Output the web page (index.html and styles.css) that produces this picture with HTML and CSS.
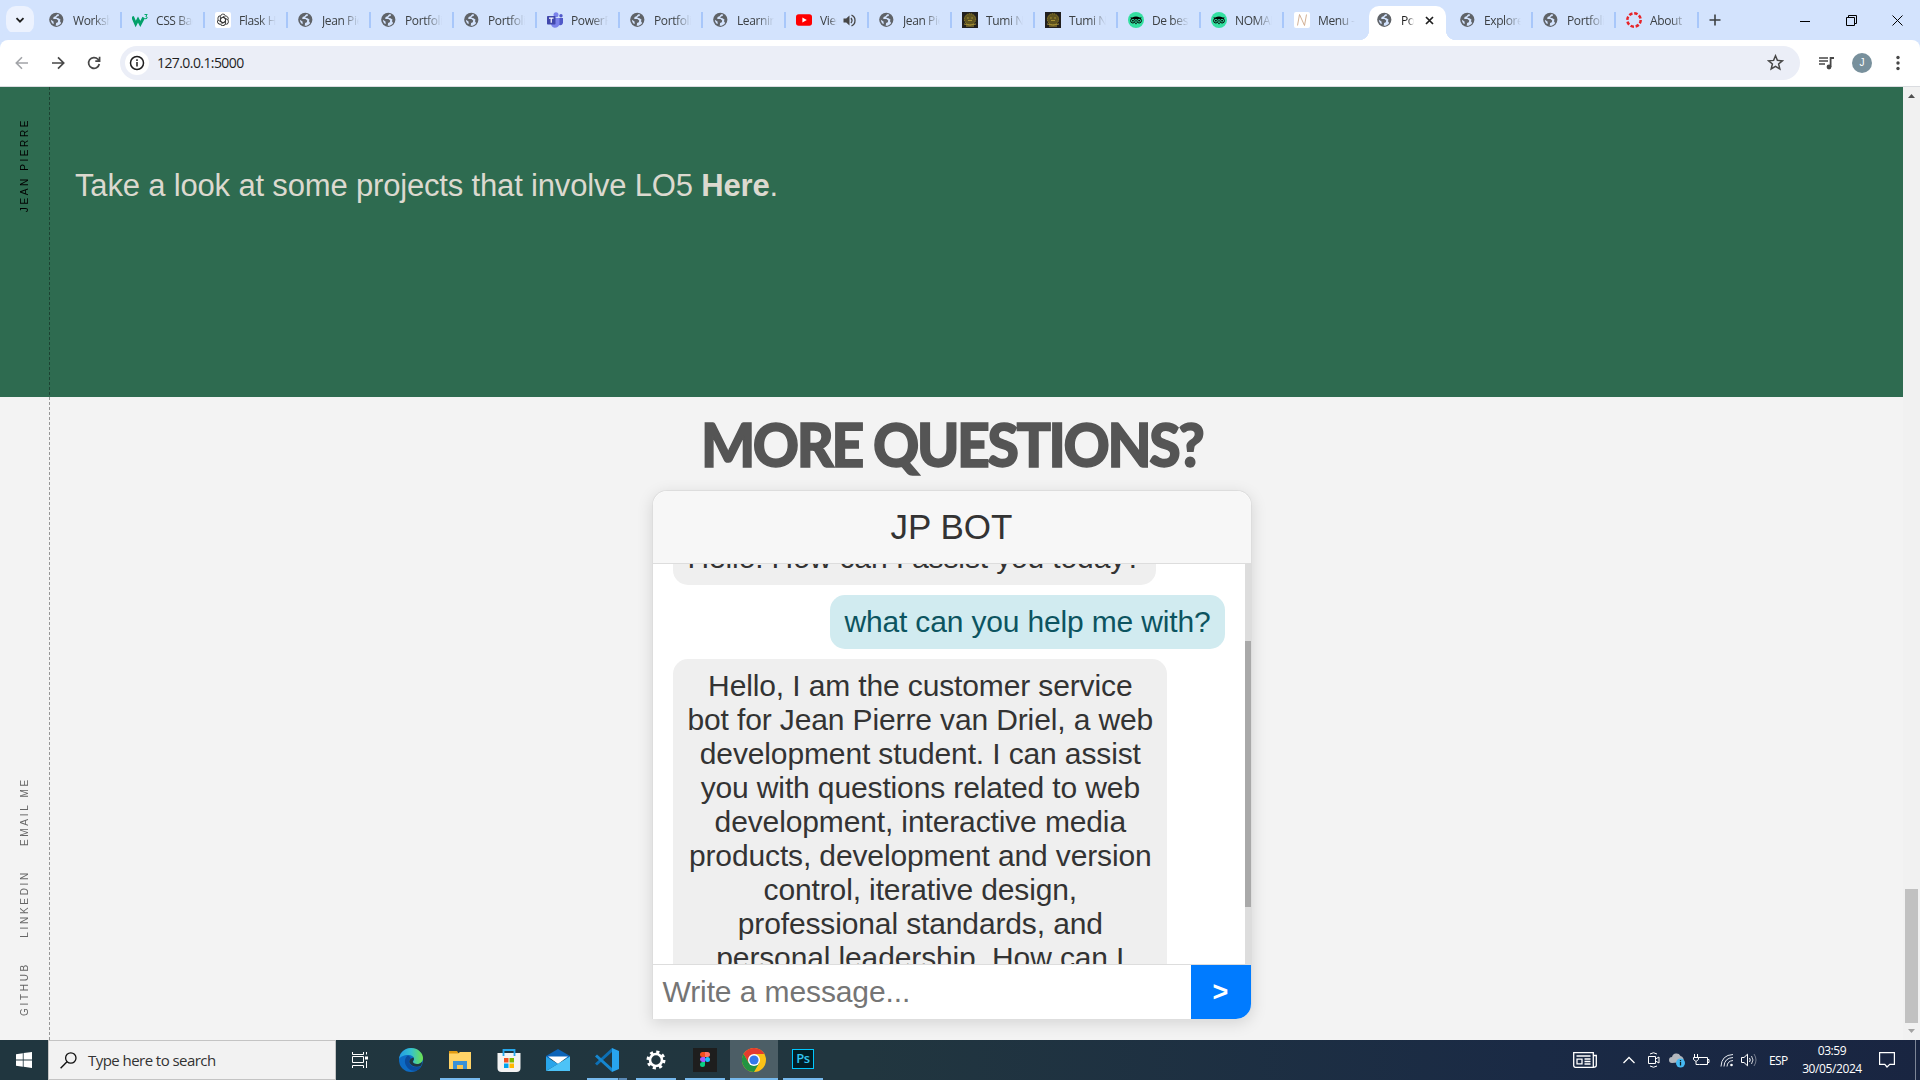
FILE: index.html
```html
<!DOCTYPE html>
<html lang="en">
<head>
<meta charset="utf-8">
<title>Portfolio</title>
<link rel="stylesheet" href="styles.css">
</head>
<body>
<svg width="0" height="0" class="defs">
  <symbol id="globe" viewBox="0 0 16 16"><circle cx="7.300" cy="7.800" r="7.100" fill="#5f6368"/><path d="M8.200 2.200 6.500 4.200 4.600 5 4.200 7h3.300l1.700 1.600-.4 1.600-1.700.9-.4 2.600c2 .2 4.300-.8 5.400-2.800L10.900 9l.7-1.300-2-1.500-2.400-.4L8 4.600l1.600-.5.6-1.500z" fill="#d3e3fd"/><path d="M1.800 7.700 4.500 9.600l.2 2.400-1-.3Q2 10 1.800 7.700z" fill="#d3e3fd"/></symbol>
  <symbol id="tumi" viewBox="0 0 16 16"><path fill="#22201f" d="M0 0h16v16H0z"/><circle cx="8" cy="7.300" r="5.600" fill="#5e5320" stroke="#9b8729" stroke-dasharray="1.200 .7"/><path d="M5 6h1.800M9.200 6H11M6 8.500h4M2 12q6 2 12 0M4 14h8" stroke="#a89235" fill="none"/></symbol>
  <symbol id="trip" viewBox="0 0 16 16"><circle cx="8" cy="8" r="8" fill="#34e0a1"/><path d="M2.300 5.600h2q3.700-2 7.400 0h2l-1 1.300H3.300z"/><circle cx="4.900" cy="8.700" r="2.300" fill="#34e0a1" stroke="#000"/><circle cx="11.100" cy="8.700" r="2.300" fill="#34e0a1" stroke="#000"/><circle cx="4.900" cy="8.700" r=".9"/><circle cx="11.100" cy="8.700" r=".9"/><path d="M6.800 10.700h2.400L8 12.500z"/></symbol>
</svg>

<header class="tabstrip">
  <button class="tab-search"><svg width="10" height="10" viewBox="0 0 10 10"><path d="M1.500 3.200 5 6.700l3.500-3.500" fill="none" stroke="#1f1f1f" stroke-width="1.800"/></svg></button>
  <nav class="tabs">
    <div class="tab"><svg class="fav"><use href="#globe"/></svg><span class="title">Workshop</span></div>
    <div class="tab"><svg class="fav" viewBox="0 0 16 16"><path d="M.5 4.500 3.700 12 6 7.500 8.300 12l3.400-6.500" fill="none" stroke="#04a06a" stroke-width="2.800"/><path d="M12.500 2.500h2.700L13.800 4.400q1.700.2 1.300 1.700-.8 1.200-2.500.4" fill="none" stroke="#04aa6d"/></svg><span class="title">CSS Backgr</span></div>
    <div class="tab"><svg class="fav" viewBox="0 0 16 16"><rect width="16" height="16" rx="2" fill="#fff"/><g fill="none" stroke="#333" stroke-width=".9"><g id="k2"><path id="k" d="M5.400 9.500V4.700a2.700 2.700 0 0 1 5-1.300M5.400 6.500l4-2.300a2.700 2.700 0 0 1 3.600 3.600"/></g><use href="#k2" transform="rotate(120 8 8)"/><use href="#k2" transform="rotate(240 8 8)"/><path d="m8 5.300 2.400 1.350v2.700L8 10.700 5.600 9.350v-2.700z"/></g></svg><span class="title">Flask HTML</span></div>
    <div class="tab"><svg class="fav"><use href="#globe"/></svg><span class="title">Jean Pierre</span></div>
    <div class="tab"><svg class="fav"><use href="#globe"/></svg><span class="title">Portfolio</span></div>
    <div class="tab"><svg class="fav"><use href="#globe"/></svg><span class="title">Portfolio</span></div>
    <div class="tab"><svg class="fav" viewBox="0 0 16 16"><circle cx="9" cy="2.700" r="2.500" fill="#7b83eb"/><circle cx="14" cy="3.800" r="1.700" fill="#5059c9"/><path d="M11 6h5v5q-1 3-4 2z" fill="#5059c9"/><path d="M4 6h8.500v6q-1 4-5 3.800Q4 15 4 11z" fill="#7b83eb"/><rect y="4" width="8.500" height="8.500" rx=".8" fill="#4148ac"/><path d="M2 6.200h4.500M4.250 6v4.800" stroke="#fff" stroke-width="1.200"/></svg><span class="title">PowerPoint</span></div>
    <div class="tab"><svg class="fav"><use href="#globe"/></svg><span class="title">Portfolio</span></div>
    <div class="tab"><svg class="fav"><use href="#globe"/></svg><span class="title">Learning</span></div>
    <div class="tab"><svg class="fav" viewBox="0 0 16 16"><rect y="2.300" width="16" height="11.500" rx="2.700" fill="red"/><path d="m6.400 5.500 4.400 2.500-4.400 2.500z" fill="#fff"/></svg><span class="title short">Viernes</span><svg class="sound" width="13" height="13" viewBox="0 0 13 13"><path d="M.5 4.500h2.700L6.500 1.500v10L3.200 8.500H.5z" fill="#474747"/><path d="M8 4q2 2.500 0 5M8.500 1.200Q12 2.500 12 6.500t-3.500 5.300" fill="none" stroke="#474747" stroke-width="1.300"/></svg></div>
    <div class="tab"><svg class="fav"><use href="#globe"/></svg><span class="title">Jean Pierre</span></div>
    <div class="tab"><svg class="fav"><use href="#tumi"/></svg><span class="title">Tumi Noord</span></div>
    <div class="tab"><svg class="fav"><use href="#tumi"/></svg><span class="title">Tumi Noord</span></div>
    <div class="tab"><svg class="fav"><use href="#trip"/></svg><span class="title">De beste</span></div>
    <div class="tab"><svg class="fav"><use href="#trip"/></svg><span class="title">NOMAD</span></div>
    <div class="tab plain"><svg class="fav" viewBox="0 0 16 16"><rect width="16" height="16" rx="2" fill="#fff"/><path d="M3.500 13.500 5.500 2.500l5 11 2-11" fill="none" stroke="#cda789" stroke-width=".9"/></svg><span class="title">Menu - N</span></div>
    <div class="tab active"><svg class="fav"><use href="#globe"/></svg><span class="title mini">Portfolio</span><svg class="close" width="9" height="9" viewBox="0 0 9 9"><path d="m1 1 7 7M8 1 1 8" stroke="#1f1f1f" stroke-width="1.700"/></svg></div>
    <div class="tab"><svg class="fav"><use href="#globe"/></svg><span class="title">Explore</span></div>
    <div class="tab"><svg class="fav"><use href="#globe"/></svg><span class="title">Portfolio</span></div>
    <div class="tab"><svg class="fav" viewBox="0 0 16 16"><circle cx="8" cy="8" r="6.700" fill="none" stroke="#e72429" stroke-width="2.500" stroke-dasharray="3.500 1.760"/></svg><span class="title">About</span></div>
  </nav>
  <svg class="new-tab" width="12" height="12" viewBox="0 0 12 12"><path d="M6 .5v11M.5 6h11" stroke="#3c4043" stroke-width="1.600"/></svg>
  <div class="window-controls">
    <svg width="11" height="11" viewBox="0 0 11 11"><path d="M0 6.500h10" stroke="#000"/></svg>
    <svg width="11" height="11" viewBox="0 0 11 11" fill="none" stroke="#000"><path d="M.5 2.500h8v8h-8zM2.500 2.500v-2h8v8h-2"/></svg>
    <svg width="11" height="11" viewBox="0 0 11 11"><path d="m.5.5 10 10m0-10-10 10" stroke="#000"/></svg>
  </div>
</header>

<div class="toolbar">
  <svg width="14" height="14" viewBox="0 0 14 14" fill="none" stroke="#a2a4a8" stroke-width="1.600"><path d="M13 7H1.500M7 1.300 1.300 7 7 12.700"/></svg>
  <svg width="14" height="14" viewBox="0 0 14 14" fill="none" stroke="#474747" stroke-width="1.700"><path d="M1 7h11.500M7 1.300 12.700 7 7 12.700"/></svg>
  <svg width="14" height="14" viewBox="0 0 14 14" fill="none" stroke="#474747" stroke-width="1.700"><path d="M12.300 8A5.400 5.400 0 1 1 11 3.300L12 4.500M12.600.8v4.300H8.300"/></svg>
  <div class="omnibox">
    <span class="site-info"><svg width="16" height="16" viewBox="0 0 16 16"><circle cx="8" cy="8" r="6.500" fill="none" stroke="#1f1f1f" stroke-width="1.500"/><path d="M8 7v4.500M8 4.300v1.600" stroke="#1f1f1f" stroke-width="1.500"/></svg></span>
    <span class="url">127.0.0.1:5000</span>
    <svg class="star" width="17" height="17" viewBox="0 0 17 17"><path d="m8.500 1.800 1.900 4.600 5 .4-3.800 3.200 1.200 4.900-4.300-2.600-4.300 2.600L5.400 10 1.600 6.800l5-.4z" fill="none" stroke="#474747" stroke-width="1.500"/></svg>
  </div>
  <svg class="media" width="17" height="14" viewBox="0 0 17 14"><path d="M1 2h9M1 5h9M1 8h6" stroke="#474747" stroke-width="1.700"/><path d="M12.600 11V2H16" fill="none" stroke="#474747" stroke-width="1.800"/><circle cx="11" cy="11" r="2.400" fill="#474747"/></svg>
  <span class="avatar">J</span>
  <svg class="dots" width="4" height="16" viewBox="0 0 4 16" fill="#474747"><circle cx="2" cy="2.500" r="1.700"/><circle cx="2" cy="8" r="1.700"/><circle cx="2" cy="13.500" r="1.700"/></svg>
</div>

<main class="viewport">
  <div class="page">
    <section class="projects"><p>Take a look at some projects that involve LO5 <b>Here</b>.</p></section>
    <section class="questions">
      <h2>MORE QUESTIONS?</h2>
      <div class="chat">
        <div class="chat-header">JP BOT</div>
        <div class="chat-body">
          <div class="messages">
            <div class="msg bot first">Hello! How can I assist you today?</div>
            <div class="msg user">what can you help me with?</div>
            <div class="msg bot">Hello, I am the customer service<br>bot for Jean Pierre van Driel, a web<br>development student. I can assist<br>you with questions related to web<br>development, interactive media<br>products, development and version<br>control, iterative design,<br>professional standards, and<br>personal leadership. How can I<br>help you today?</div>
          </div>
          <div class="chat-scroll"><i></i></div>
        </div>
        <div class="chat-input"><span>Write a message...</span><button>&gt;</button></div>
      </div>
    </section>
    <aside class="rail">
      <a class="brand">JEAN PIERRE</a>
      <div class="links"><a>EMAIL ME</a><a>LINKEDIN</a><a>GITHUB</a></div>
    </aside>
  </div>
  <div class="scrollbar">
    <svg width="17" height="17" viewBox="0 0 17 17"><path d="m5 11 3.500-4 3.500 4z" fill="#505050"/></svg>
    <i class="thumb"></i>
    <svg width="17" height="17" viewBox="0 0 17 17"><path d="m5 6 3.500 4L12 6z" fill="#a3a3a3"/></svg>
  </div>
</main>

<footer class="taskbar">
  <div class="start"><svg width="16" height="16" viewBox="0 0 16 16" fill="#fff"><path d="M0 2.200 6.800 1.200v6.400H0zM7.600 1.100 16 0v7.600H7.600zM0 8.400h6.800v6.400L0 13.800zM7.600 8.400H16V16l-8.400-1.200z"/></svg></div>
  <div class="search"><svg width="17" height="17" viewBox="0 0 17 17"><circle cx="10.800" cy="6" r="5.200" fill="none" stroke="#111" stroke-width="1.300"/><path d="M7 9.800.6 16.300" stroke="#111" stroke-width="1.400"/></svg><span>Type here to search</span></div>
  <div class="taskview"><svg width="17" height="16" viewBox="0 0 17 16" fill="none" stroke="#fff"><path d="M.5 0v2.500h11V0M.5 16v-2.500h11V16M.5 4.500h11v6H.5zM14.500 0v2.500M14.500 9v7"/><path d="M13 4.500h3v3h-3z" fill="#fff" stroke="none"/></svg></div>
  <div class="apps">
    <div class="app"><svg width="24" height="24" viewBox="0 0 24 24"><defs><linearGradient id="eg" x1="0" x2="1"><stop stop-color="#229be4"/><stop offset=".5" stop-color="#35c1cf"/><stop offset="1" stop-color="#6ee34c"/></linearGradient></defs><circle cx="12" cy="12" r="12" fill="#0d6bc4"/><path d="M0 11C1 4 6 0 12 0c7 0 12 5 12 10 0 4-3 6-6 6-3 0-4-1-4-2s1-1 1-3c0-2-2-4-6-4-4 0-8 2-9 4z" fill="url(#eg)"/><path d="M9 7.500c-3 2-4 6-2 10 2 4 6 6 10 5.200 2-.6 4-2 5.200-4.400-4 2-10 1-11.700-3-.8-2-.3-4 1.500-5-.6-1.200-1.500-2-3-2.800z" fill="#0b4c9d"/><path d="M14.500 9.500c1 2 0 2.500-.6 3.600-.5 1.400 1 3 4 3 2 0 4.100-.8 5.200-2.300-.2 2-.6 3-1.200 4-4 2-9.500.6-11.200-2.800-1-2 0-4.500 3.800-5.500z" fill="#203640"/></svg></div>
    <div class="app open"><svg width="24" height="24" viewBox="0 0 24 24"><path d="M1 3h8l2 3H1z" fill="#e09a12"/><path d="M1 5.500h9L12 4h11v17H1z" fill="#ffd367"/><path d="M5 13h14v8h-4v-4H9v4H5z" fill="#3a91d8"/><path d="M9 17h6v4H9z" fill="#f8c450"/></svg></div>
    <div class="app"><svg width="24" height="24" viewBox="0 0 24 24"><path d="M6.500 7V2h11v5" fill="none" stroke="#27a8ed" stroke-width="1.800"/><path d="M.5 5h23v15q0 4-4 4h-15q-4 0-4-4z" fill="#f3f3f3"/><path d="M7 10h4.500v4.500H7z" fill="#f25022"/><path d="M12.500 10H17v4.500h-4.500z" fill="#7fba00"/><path d="M7 15.500h4.500V20H7z" fill="#00a4ef"/><path d="M12.500 15.500H17V20h-4.500z" fill="#ffb900"/><path d="M6.500 5V8M17.500 5v3" stroke="#27a8ed" stroke-width="1.800"/></svg></div>
    <div class="app"><svg width="24" height="24" viewBox="0 0 24 24"><path d="M0 8 12 1l12 7v3H0z" fill="#0c64b8"/><path d="M2 8.500h20L12 16z" fill="#fff"/><path d="M24 8.500 0 23h24z" fill="#4cc3f7"/><path d="M0 8.500 12 16 0 23z" fill="#28a5ea"/></svg></div>
    <div class="app open stacked"><svg width="24" height="24" viewBox="0 0 24 24"><path d="M17 4 2 17.500 0 15.500 17 0z" fill="#0d70b5"/><path d="M17 20 2 6.500 0 8.500 17 24z" fill="#1687cf"/><path d="m17 0 7 3v18l-7 3z" fill="#28a4ee"/></svg></div>
    <div class="app open"><svg width="20" height="20" viewBox="0 0 20 20"><circle cx="10" cy="10" r="6" fill="none" stroke="#fff" stroke-width="2.600"/><circle cx="10" cy="10" r="8" fill="none" stroke="#fff" stroke-width="3" stroke-dasharray="3.100 3.183"/></svg></div>
    <div class="app open"><svg width="24" height="24" viewBox="0 0 24 24"><path fill="#1e1e1e" d="M0 0h24v24H0z"/><path d="M12 4H9.500a2.500 2.500 0 0 0 0 5H12z" fill="#f24e1e"/><path d="M12 4h2.500a2.500 2.500 0 0 1 0 5H12z" fill="#ff7262"/><path d="M12 9H9.500a2.500 2.500 0 0 0 0 5H12z" fill="#a259ff"/><circle cx="14.500" cy="11.500" r="2.500" fill="#1abcfe"/><path d="M12 14H9.500a2.500 2.500 0 1 0 2.500 2.500z" fill="#0acf83"/></svg></div>
    <div class="app open current"><svg width="24" height="24" viewBox="0 0 24 24"><circle cx="12" cy="12" r="12" fill="#fbc116"/><path d="M1.600 6A12 12 0 0 1 22.400 6H12v6l-5.200 3z" fill="#e33b2e"/><path d="M1.600 6A12 12 0 0 0 12 24l5.200-9H12l-5.200 0z" fill="#229342"/><circle cx="12" cy="12" r="6" fill="#fff"/><circle cx="12" cy="12" r="4.600" fill="#3478ea"/></svg></div>
    <div class="app open"><div class="ps">Ps</div></div>
  </div>
  <div class="tray">
    <svg width="24" height="16" viewBox="0 0 24 16" fill="none" stroke="#fff" stroke-width="1.300"><path d="M.7.700h19.600v14.600H2.500Q.7 15.300.7 13.500zM20.300 3.500h3v10q0 1.800-3 1.800"/><path d="M3.500 4h14M11.500 7h6M11.500 9.500h6M11.500 12h6M4 7.200h5v4.600H4z"/></svg>
    <svg width="12" height="8" viewBox="0 0 12 8"><path d="M.5 7 6 1.500 11.500 7" fill="none" stroke="#fff" stroke-width="1.300"/></svg>
    <svg width="12" height="16" viewBox="0 0 12 16" fill="none" stroke="#fff"><path d="M.5 4.500h7v7h-7zM7.500 7l3.500-2v6L7.500 9M2 2q3.500-2.500 7 0M2 14q3.500 2.500 7 0"/></svg>
    <svg width="16" height="15" viewBox="0 0 16 15"><path d="M3 10a3 3 0 0 1 0-6 4.600 4.600 0 0 1 8.500-1A4 4 0 0 1 14 9z" fill="#b3b7bd"/><circle cx="11.500" cy="10" r="4.500" fill="#46b9f2"/><path d="M11.500 9v3.500M11.500 7v1.200" stroke="#122" stroke-width="1.300"/></svg>
    <svg width="17" height="14" viewBox="0 0 17 14" fill="none" stroke="#fff"><path d="M5.500 4.500h9v7h-8M14.500 6.500h1.500v3h-1.500M1.500 1v3M4.500 1v3M.5 4.500h5v2l-2.500 2-2.500-2zM3 8.500v3h3.500"/></svg>
    <svg width="14" height="14" viewBox="0 0 14 14" fill="none" stroke="#e8ebf0"><path d="M1 13.500Q1.500 2 13 1.500M4 13.500Q4.300 5 13 4.500M7 13.500Q7.300 8 13 7.500"/><circle cx="11.500" cy="12" r="1.300" fill="#fff" stroke="none"/></svg>
    <svg width="17" height="14" viewBox="0 0 17 14" fill="none" stroke="#fff"><path d="M.5 4.500H3L6.500 1.200v11.600L3 9.500H.5zM8.500 5q1.500 2 0 4"/><path d="M10.500 3q3 4 0 8" opacity=".8"/><path d="M13 1q4 6 0 12" opacity=".4"/></svg>
    <span class="lang">ESP</span>
    <span class="clock"><span>03:59</span><span>30/05/2024</span></span>
    <svg width="16" height="16" viewBox="0 0 16 16"><path d="M.6.700h14.800v11.600h-4.600L8 15 5.800 12.300H.6z" fill="none" stroke="#fff" stroke-width="1.200"/></svg>
    <i class="peek"></i>
  </div>
</footer>
</body>
</html>
```
FILE: styles.css
```css
* { box-sizing: border-box; }
html, body { margin: 0; height: 100%; overflow: hidden; }
body { display: flex; flex-direction: column; font-family: "Liberation Sans", Arial, sans-serif; background: #f3f3f3; }
svg { display: block; flex: none; }
.defs { position: absolute; }
button { border: 0; padding: 0; }

.tabstrip { flex: none; height: 40px; display: flex; align-items: center; background: #d3e3fd; padding-left: 6px; }
.tab-search { width: 28px; height: 28px; border-radius: 10px; background: #ecf2fe; display: flex; align-items: center; justify-content: center; margin-right: 5px; }
.tabs { display: flex; height: 40px; }
.tab { position: relative; width: 83px; display: flex; align-items: center; padding-left: 10px; font: 12px "Open Sans", "Noto Sans", sans-serif; letter-spacing: -.4px; color: #3c4043; }
.tab::after { content: ""; position: absolute; right: 0; top: 12px; width: 2px; height: 16px; background: #a8c7fa; }
.fav { width: 16px; height: 16px; margin-right: 8px; }
.title { width: 37px; overflow: hidden; white-space: nowrap; -webkit-mask-image: linear-gradient(90deg, #000 55%, transparent); mask-image: linear-gradient(90deg, #000 55%, transparent); }
.title.short { width: 17px; }
.title.mini { width: 13px; }
.sound { margin-left: 6px; }
.tab.active { z-index: 1; color: #1f1f1f; }
.tab.active::before { content: ""; position: absolute; z-index: -1; left: 2px; top: 6px; width: 77px; height: 34px; border-radius: 10px 10px 0 0; background: #fff; }
.tab.active::after { left: -8px; right: auto; top: 30px; width: 97px; height: 10px; background: radial-gradient(circle at 0 0, transparent 10px, #fff 10.500px) left / 10px 10px no-repeat, radial-gradient(circle at 100% 0, transparent 10px, #fff 10.500px) right / 10px 10px no-repeat; }
.tab.plain::after { display: none; }
.close { margin-left: 11px; }
.new-tab { margin-left: 10px; }
.window-controls { margin-left: auto; display: flex; gap: 35px; padding-right: 17px; }

.toolbar { flex: none; height: 47px; display: flex; align-items: center; gap: 22px; padding: 0 20px 1px 15px; background: #fff; border-bottom: 1px solid #dadce0; border-radius: 8px 8px 0 0; box-shadow: 0 -8px #d3e3fd; position: relative; }
.omnibox { flex: none; margin-left: -3px; width: 1680px; height: 34px; border-radius: 17px; background: #ebeef7; display: flex; align-items: center; padding: 0 16px 0 5px; }
.site-info { width: 24px; height: 24px; border-radius: 50%; background: #fff; display: grid; place-items: center; }
.url { margin-left: 8px; font: 14px "Open Sans", sans-serif; letter-spacing: -.58px; color: #1f1f1f; }
.star { margin-left: auto; }
.media { margin-left: -4px; }
.avatar { width: 20px; height: 20px; margin-left: -5px; border-radius: 50%; background: #78909c; color: #fff; font-size: 10px; display: grid; place-items: center; }
.dots { margin-left: 2px; }

.viewport { flex: 1; min-height: 0; display: flex; }
.page { flex: 1; position: relative; overflow: hidden; background: #f3f3f3; }
.projects { height: 310px; padding: 80px 75px; background: #2e6b50; color: #dcd9cf; }
.projects p { margin: 0; font-size: 31px; line-height: 38px; letter-spacing: -.17px; }
.questions { display: flex; flex-direction: column; align-items: center; }
.questions h2 { margin: 11px 0 10px; font: 900 60px/72px Lato, sans-serif; letter-spacing: -2.500px; color: #555; -webkit-text-stroke: 1.500px #555; white-space: nowrap; transform: scaleX(.951); }
.chat { width: 600px; height: 529px; display: flex; flex-direction: column; border: 1px solid #ddd; border-bottom: 0; border-radius: 15px 15px 15px 0; box-shadow: 0 4px 16px rgba(0,0,0,.13); background: #fff; }
.chat-header { flex: none; height: 73px; border-bottom: 1px solid #ddd; border-radius: 15px 15px 0 0; background: #f7f7f7; text-align: center; font-size: 35px; line-height: 72px; color: #333; }
.chat-body { flex: none; height: 400px; display: flex; overflow: hidden; }
.messages { flex: 1; display: flex; flex-direction: column; align-items: flex-start; gap: 10px; padding: 0 20px; font-size: 30px; line-height: 34px; letter-spacing: -.13px; text-align: center; color: #333; }
.msg { flex: none; padding: 10px 14px 10px 15px; border-radius: 15px; background: #efefef; white-space: nowrap; }
.first { margin-top: -33px; }
.user { align-self: flex-end; padding-left: 14px; background: #d1ebf0; color: #0c5460; letter-spacing: -.16px; }
.chat-scroll { width: 6px; background: #ddd; padding-top: 77px; }
.chat-scroll i { display: block; height: 266px; background: #a9a9a9; }
.chat-input { flex: 1; display: flex; border-top: 1px solid #ddd; }
.chat-input span { flex: 1; padding-left: 10px; font-size: 30px; line-height: 54px; letter-spacing: -.1px; color: #757575; }
.chat-input button { width: 60px; background: #007bff; color: #fff; border-radius: 0 0 15px 0; font: bold 27px "Liberation Sans", sans-serif; }

.rail { position: absolute; left: 0; top: 0; width: 50px; height: 100%; display: flex; flex-direction: column; justify-content: space-between; align-items: center; padding: 31px 0 24px; background: repeating-linear-gradient(180deg, rgba(0,0,0,.38) 0 3px, transparent 3px 5px) right / 1px 100% no-repeat; }
.rail a { writing-mode: vertical-rl; transform: rotate(180deg); font-size: 10px; line-height: 12px; letter-spacing: 2.700px; color: #666; }
.rail .brand { color: #000; letter-spacing: 2.600px; }
.links { display: flex; flex-direction: column; gap: 24px; }

.scrollbar { width: 17px; display: flex; flex-direction: column; justify-content: space-between; background: #f1f1f1; }
.thumb { width: 13px; height: 134px; margin: auto 2px 0; background: #c1c1c1; }

.taskbar { flex: none; height: 40px; display: flex; background: linear-gradient(90deg, #20363f 0%, #21363f 45%, #1a2a45 80%, #192541 100%); color: #fff; }
.start { width: 48px; display: grid; place-items: center; }
.search { width: 288px; border: 1px solid #c4c4c4; background: #f2f2f2; display: flex; align-items: center; gap: 11px; padding-left: 11px; font: 15px "Open Sans", sans-serif; letter-spacing: -.55px; color: #333; }
.taskview { width: 51px; display: flex; align-items: center; padding-left: 16px; }
.apps { display: flex; gap: 1px; }
.app { width: 48px; position: relative; display: grid; place-items: center; }
.open::after { content: ""; position: absolute; left: 4px; right: 4px; bottom: 0; height: 2px; background: #76b9ed; }
.stacked::after { background: linear-gradient(90deg, #76b9ed 31px, #3e5d70 31px 32px, #5b8ab6 32px); }
.current { background: #4c5e66; }
.current::after { left: 0; right: 0; }
.ps { width: 22px; height: 20px; margin-top: -2px; border: 1px solid #00c8ff; background: #001e26; color: #31c5f0; font: 600 13px/17px "Open Sans", sans-serif; text-align: center; letter-spacing: -.5px; }
.tray { margin-left: auto; width: 347px; display: grid; grid-template-columns: 50px 25px 21px 24px 27px 21px 28px 20px 86px 40px 5px; align-items: center; font: 12px "Open Sans", sans-serif; }
.lang { letter-spacing: -.6px; }
.clock { display: flex; flex-direction: column; align-items: center; line-height: 18px; letter-spacing: -.4px; margin-top: -1px; }
.tray .clock + svg { margin-left: 4px; }
.peek { width: 1px; height: 40px; background: #7d8596; }
```
